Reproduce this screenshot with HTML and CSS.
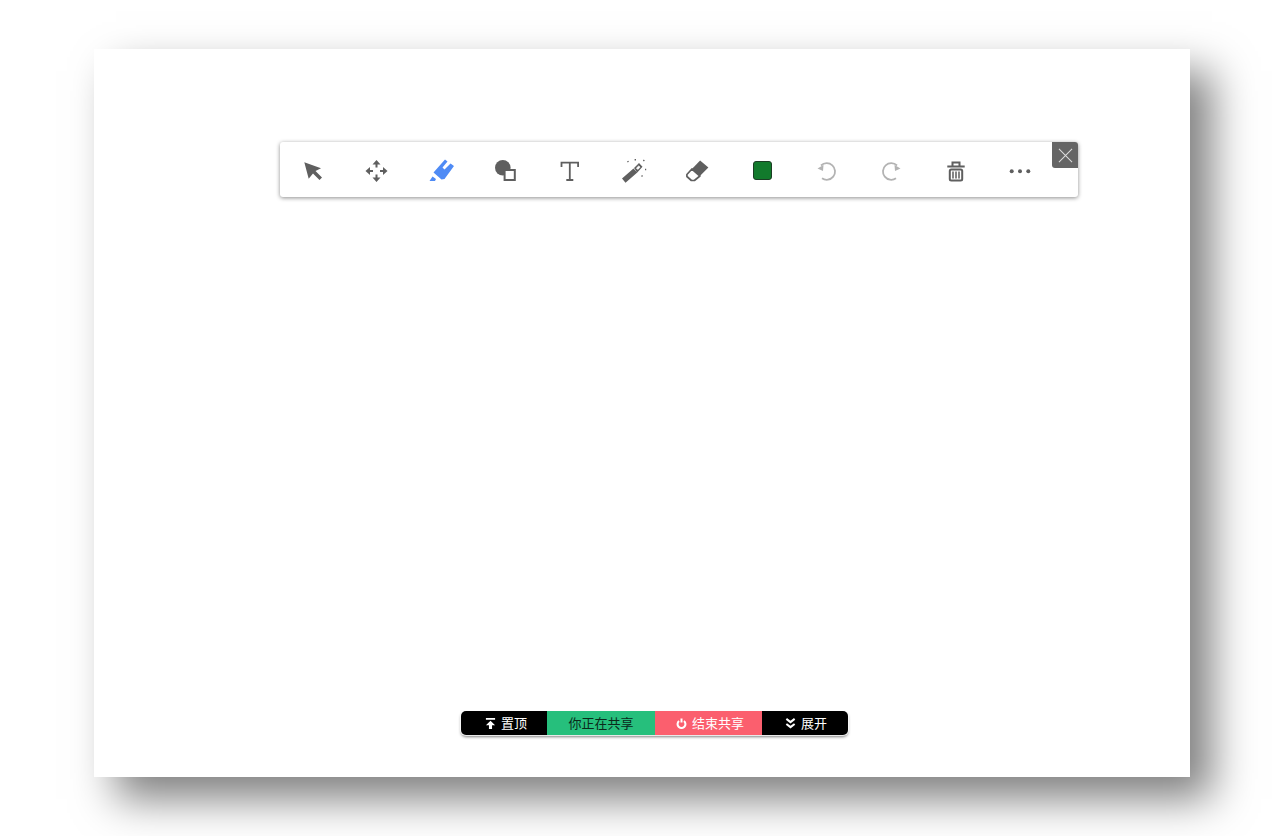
FILE: index.html
```html
<!DOCTYPE html>
<html lang="zh">
<head>
<meta charset="utf-8">
<title>共享白板</title>
<link rel="stylesheet" href="styles.css">
</head>
<body>
<main class="board">
  <div class="toolbar">
    <button class="tool"><svg viewBox="0 0 24 24"><path class="fill" d="M3.300 3.200L20 9.200l-5.500 2.800 6.500 6.500-2.500 2.500-6.500-6.500-4.300 5.300z"/></svg></button>
    <button class="tool"><svg viewBox="0 0 24 24"><path class="line" d="M11.500 5v3.500M11.500 15.500V19M4.500 12H8M15 12h3.500"/><path class="fill" d="M11.500 1l4 4.500h-8zM11.500 23l-4-4.500h8zM.5 12L5 8v8zM22.500 12L18 16V8z"/></svg></button>
    <button class="tool"><svg viewBox="0 0 24 24"><path class="blue" d="M15 .5l2.500 2-5 6 2 2 6-6L24 7l-9.500 13-3 .5-8-7zM2.500 17.500L6 20l-1 2H-.5z"/></svg></button>
    <button class="tool"><svg viewBox="0 0 24 24"><circle class="fill" cx="8.800" cy="8.700" r="7.800"/><rect class="outline" x="10.600" y="11" width="10.200" height="10"/></svg></button>
    <button class="tool"><svg viewBox="0 0 24 24"><path class="thin" d="M3.500 8V3.700h16.600V8M11.800 3.700V21M8.300 21h7"/></svg></button>
    <button class="tool"><svg viewBox="0 0 24 24"><path class="fill" d="M0 19.500l3.500 4.300 11.800-10.300-3.800-4zM12 9l5-5 3.500 3.800-5.200 5.700z"/><path class="white" d="M14.500 9l2.300-2 1.200 1.200-2.200 2.200z"/><path class="dots" d="M5.700 2l.6 1.100M13.300 0v1.400M22.300 1l-.9 1M23 10.500h1.200M19.600 16.600l.9.9"/></svg></button>
    <button class="tool"><svg viewBox="0 0 24 24"><path class="fill" d="M13.100 1.500l8.300 7-8.500 8.500-8-7z"/><path class="eraser" d="M4.900 10l-5 5.500v2l4.500 4h3l5.500-4.500z"/></svg></button>
    <button class="tool"><span class="swatch"></span></button>
    <button class="tool"><svg viewBox="0 0 24 24"><path class="soft" d="M6 6.500a8.300 8.300 0 1 1 1 12.800"/><path class="softfill" d="M2.500 9.500L8.500 6l-.5 6z"/></svg></button>
    <button class="tool"><svg viewBox="0 0 24 24"><path class="soft" d="M18 6.500a8.300 8.300 0 1 0-1 12.800"/><path class="softfill" d="M21.500 9.500L15.500 6l.5 6z"/></svg></button>
    <button class="tool"><svg viewBox="0 0 24 24"><path class="line" d="M3.300 7.500h17.400M8.500 7V3.500h7V7"/><rect class="outline" x="5.800" y="10.500" width="12.400" height="11" rx="1.500"/><path class="bars" d="M9 12.500v7M12 12.500v7M15 12.500v7"/></svg></button>
    <button class="tool"><svg viewBox="0 0 24 24"><circle class="fill" cx="3.700" cy="12.200" r="2"/><circle class="fill" cx="12" cy="12.200" r="2"/><circle class="fill" cx="20.300" cy="12.200" r="2"/></svg></button>
    <button class="close"><svg viewBox="0 0 16 16"><path d="M1 1l14 14M15 1L1 15"/></svg></button>
  </div>
  <div class="sharebar">
    <div class="seg seg-top"><svg viewBox="0 0 12 12"><path d="M1 0h10v2H1zM6 3l5 5H7.700v4H4.300V8H1z"/></svg>置顶</div>
    <div class="seg seg-status">你正在共享</div>
    <div class="seg seg-stop"><svg viewBox="0 0 12 12"><path class="power" d="M3.300 3.300a4.300 4.300 0 1 0 5.400 0M6 0.500V5"/></svg>结束共享</div>
    <div class="seg seg-open"><svg viewBox="0 0 12 12"><path class="chev" d="M1.500 1L6 4.500 10.500 1M1.500 6.500L6 10l4.500-3.500"/></svg>展开</div>
  </div>
</main>
</body>
</html>
```
FILE: styles.css
```css
* { box-sizing: border-box; }
html, body { margin: 0; height: 100%; background: #fff; overflow: hidden; }
body { padding: 49px 0 0 94px; font-family: "Noto Sans CJK SC", "Liberation Sans", sans-serif; }

.board {
  width: 1096px;
  height: 728px;
  background: #fff;
  box-shadow: 22px 22px 40px rgba(0, 0, 0, .5);
  padding: 93px 0 42px 186px;
  display: flex;
  flex-direction: column;
  justify-content: space-between;
}

.toolbar {
  position: relative;
  width: 798px;
  height: 55px;
  padding: 2px 26px 0 1px;
  display: grid;
  grid-template-columns: repeat(12, 1fr);
  background: #fff;
  border-radius: 3px;
  box-shadow: 0 1px 4px rgba(0, 0, 0, .45);
}

.tool {
  display: flex;
  align-items: center;
  justify-content: center;
  padding: 0;
  border: 0;
  background: none;
}
.tool svg { width: 24px; height: 24px; overflow: visible; }

.fill { fill: #5f5f5f; }
.blue { fill: #4f8bf5; }
.line { fill: none; stroke: #5f5f5f; stroke-width: 2; }
.outline { fill: #fff; stroke: #5f5f5f; stroke-width: 2; }
.eraser { fill: #fff; stroke: #5f5f5f; stroke-width: 1.700; stroke-linejoin: round; }
.bars { fill: none; stroke: #5f5f5f; stroke-width: 1.500; }
.thin { fill: none; stroke: #5f5f5f; stroke-width: 1.800; }
.white { fill: #fff; stroke: #fff; stroke-width: .8; }
.dots { fill: none; stroke: #5f5f5f; stroke-width: 1.400; }
.soft { fill: none; stroke: #b3b3b3; stroke-width: 1.800; }
.softfill { fill: #b3b3b3; }

.swatch {
  width: 19px;
  height: 19px;
  background: #127a2c;
  border: 1px solid #1c3d24;
  border-radius: 3px;
}

.close {
  position: absolute;
  top: 0;
  right: 0;
  width: 26px;
  height: 26px;
  padding: 0;
  border: 0;
  display: flex;
  align-items: center;
  justify-content: center;
  background: #656565;
  border-radius: 0 3px 0 3px;
}
.close svg { width: 15px; height: 15px; }
.close path { fill: none; stroke: #ddd; stroke-width: 1.100; }

.sharebar {
  align-self: flex-start;
  margin-left: 181px;
  display: flex;
  width: 387px;
  height: 24px;
  border-radius: 5px;
  overflow: hidden;
  box-shadow: 0 0 0 1px rgba(255, 255, 255, .8), 0 2px 3px rgba(0, 0, 0, .5);
  font-size: 13px;
  line-height: 24px;
  color: #fff;
}

.seg {
  display: flex;
  align-items: center;
  justify-content: center;
  gap: 5px;
}
.seg svg { width: 11px; height: 11px; }
.seg path { fill: #fff; }
.seg path.power, .seg path.chev { fill: none; stroke: #fff; stroke-width: 2.200; }
.seg-top { width: 86px; background: #000; padding-left: 4px; }
.seg-status { width: 108px; background: #26bf7c; color: #0b2a1b; }
.seg-stop { width: 107px; background: #fb5f6e; padding-left: 3px; }
.seg-open { width: 86px; background: #000; padding-left: 2px; }
```
